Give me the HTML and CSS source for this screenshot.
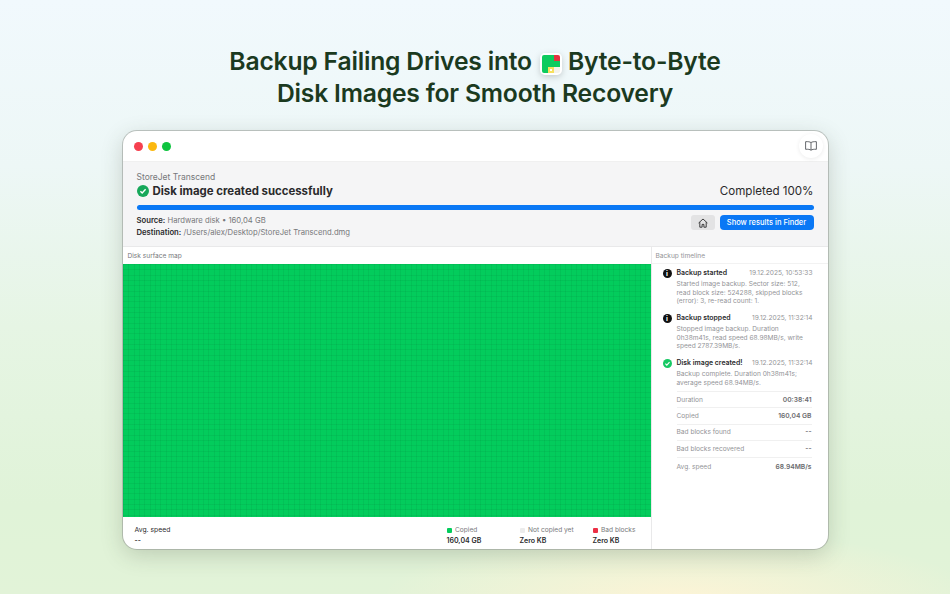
FILE: index.html
```html
<!DOCTYPE html>
<html lang="en">
<head>
    <meta charset="UTF-8">
    <meta name="viewport" content="width=device-width, initial-scale=1.0">
    <title>Backup Failing Drives</title>
    <link rel="stylesheet" href="styles.css">
</head>
<body>
    <h1 class="headline">
        <span class="headline-row">Backup Failing Drives into
            <svg class="app-icon" width="22" height="22" viewBox="0 0 22 22">
                <rect width="22" height="22" rx="5" fill="#fff"/>
                <path d="M4 2h10v6h6v6H8v6H4a2 2 0 0 1-2-2V4a2 2 0 0 1 2-2z" fill="#0dcb5e"/>
                <path d="M14 2h4a2 2 0 0 1 2 2v4h-6z" fill="#e5323f"/>
                <path d="M8 14h6v6H8z" fill="#f6e05e"/>
                <path d="M10 16h2v2h-2z" fill="#fff"/>
                <path d="M14 14h6v4a2 2 0 0 1-2 2h-4z" fill="#f4f2ea"/>
            </svg>
            Byte-to-Byte</span>
        <span class="headline-row">Disk Images for Smooth Recovery</span>
    </h1>

    <div class="window">
        <div class="titlebar">
            <div class="traffic">
                <span class="dot dot-red"></span>
                <span class="dot dot-yellow"></span>
                <span class="dot dot-green"></span>
            </div>
            <button class="book-btn" aria-label="Manual">
                <svg width="12" height="10" viewBox="0 0 12 10" fill="none" stroke="#55585c" stroke-width="0.9" stroke-linejoin="round">
                    <path d="M6 1.6C5 .8 3 .5.6.7v7.6C3 8.1 5 8.4 6 9.2c1-.8 3-1.1 5.4-.9V.7C9 .5 7 .8 6 1.6zM6 1.6v7.6"/>
                </svg>
            </button>
        </div>

        <div class="status">
            <div class="device">StoreJet Transcend</div>
            <div class="status-row">
                <div class="status-title">
                    <svg width="12" height="12" viewBox="0 0 12 12">
                        <circle cx="6" cy="6" r="6" fill="#17a85a"/>
                        <path d="M3.4 6.2l1.8 1.8 3.4-3.7" fill="none" stroke="#fff" stroke-width="1.4"/>
                    </svg>
                    Disk image created successfully
                </div>
                <div class="status-percent">Completed 100%</div>
            </div>
            <div class="progress"></div>
            <div class="status-foot">
                <div class="paths">
                    <div><b>Source:</b> Hardware disk • 160,04 GB</div>
                    <div><b>Destination:</b> /Users/alex/Desktop/StoreJet Transcend.dmg</div>
                </div>
                <button class="home-btn" aria-label="Home">
                    <svg width="10" height="10" viewBox="0 0 10 10" fill="none" stroke="#2b2b2d" stroke-width="0.9">
                        <path d="M.6 5L5 1l4.4 4M1.8 4.2v5h2.3V6.4h1.8v2.8h2.3v-5"/>
                    </svg>
                </button>
                <button class="finder-btn">Show results in Finder</button>
            </div>
        </div>

        <div class="panels">
            <div class="map-panel">
                <div class="panel-label">Disk surface map</div>
                <div class="surface"></div>
                <div class="map-foot">
                    <div class="speed">
                        <div>Avg. speed</div>
                        <b>--</b>
                    </div>
                    <div class="legend legend-copied">
                        <div class="legend-key"><span class="swatch swatch-green"></span>Copied</div>
                        <b>160,04 GB</b>
                    </div>
                    <div class="legend legend-pending">
                        <div class="legend-key"><span class="swatch swatch-grey"></span>Not copied yet</div>
                        <b>Zero KB</b>
                    </div>
                    <div class="legend legend-bad">
                        <div class="legend-key"><span class="swatch swatch-red"></span>Bad blocks</div>
                        <b>Zero KB</b>
                    </div>
                </div>
            </div>

            <div class="side-panel">
                <div class="panel-label">Backup timeline</div>
                <div class="timeline">
                    <div class="event">
                        <span class="event-icon">i</span>
                        <div class="event-body">
                            <div class="event-head"><b>Backup started</b><span>19.12.2025, 10:53:33</span></div>
                            <p>Started image backup. Sector size: 512, read block size: 524288, skipped blocks (error): 3, re-read count: 1.</p>
                        </div>
                    </div>
                    <div class="event">
                        <span class="event-icon">i</span>
                        <div class="event-body">
                            <div class="event-head"><b>Backup stopped</b><span>19.12.2025, 11:32:14</span></div>
                            <p>Stopped image backup. Duration 0h38m41s, read speed 68.98MB/s, write speed 2787.39MB/s.</p>
                        </div>
                    </div>
                    <div class="event event-short">
                        <svg class="event-check" width="9" height="9" viewBox="0 0 12 12">
                            <circle cx="6" cy="6" r="6" fill="#17c964"/>
                            <path d="M3.2 6.2l1.9 1.9 3.6-3.9" fill="none" stroke="#fff" stroke-width="1.5"/>
                        </svg>
                        <div class="event-body">
                            <div class="event-head"><b>Disk image created!</b><span>19.12.2025, 11:32:14</span></div>
                            <p>Backup complete. Duration 0h38m41s; average speed 68.94MB/s.</p>
                        </div>
                    </div>
                </div>
                <div class="stats">
                    <div class="stat"><span>Duration</span><b>00:38:41</b></div>
                    <div class="stat"><span>Copied</span><b>160,04 GB</b></div>
                    <div class="stat"><span>Bad blocks found</span><b>--</b></div>
                    <div class="stat"><span>Bad blocks recovered</span><b>--</b></div>
                    <div class="stat stat-last"><span>Avg. speed</span><b>68.94MB/s</b></div>
                </div>
            </div>
        </div>
    </div>
</body>
</html>
```

FILE: styles.css
```css
:root {
    --blue: #0a78f5;
    --green: #03cc5c;
    --text-primary: #2a2a2c;
    --text-secondary: #77787b;
    --text-muted: #939497;
    --line: #e9e9ea;
}

* {
    margin: 0;
    padding: 0;
    box-sizing: border-box;
    font-family: 'Inter', 'Liberation Sans', sans-serif;
}

html, body {
    height: 594px;
    overflow: hidden;
}

body {
    background:
        radial-gradient(ellipse 300px 70px at 680px 600px, #fdf4d6 0%, rgba(253, 244, 214, 0) 100%),
        linear-gradient(180deg, #f1f9fd 0%, #edf7f6 28%, #e6f5e4 55%, #e0f3d8 85%, #e2f3d8 100%);
    display: flex;
    flex-direction: column;
    align-items: center;
    padding-top: 45px;
}

.headline {
    color: #1b3a1f;
    font-size: 24.7px;
    line-height: 32px;
    font-weight: 600;
    letter-spacing: -0.2px;
    text-align: center;
    margin-bottom: 22px;
}

.headline-row {
    display: block;
}

.app-icon {
    vertical-align: -5px;
    margin: 0 0 0 2px;
    filter: drop-shadow(0 2px 3px rgba(0, 0, 0, 0.18));
}

.window {
    width: 705px;
    height: 418px;
    background: #fff;
    border-radius: 14px;
    overflow: hidden;
    display: flex;
    flex-direction: column;
    box-shadow: 0 0 0 1px rgba(150, 155, 150, 0.55), 0 6px 22px rgba(60, 70, 50, 0.22);
}

.titlebar {
    height: 31px;
    flex-shrink: 0;
    display: flex;
    align-items: center;
    justify-content: space-between;
    padding: 0 5px 0 11px;
    border-bottom: 1px solid #f0f0f0;
}

.traffic {
    display: flex;
    gap: 5px;
}

.dot {
    width: 9px;
    height: 9px;
    border-radius: 50%;
}

.dot-red { background: #f6404f; }
.dot-yellow { background: #fbb80f; }
.dot-green { background: #0ec43f; }

.book-btn {
    width: 24px;
    height: 24px;
    border: none;
    border-radius: 50%;
    background: #fff;
    box-shadow: 0 1px 4px rgba(0, 0, 0, 0.08);
    display: flex;
    align-items: center;
    justify-content: center;
}

.status {
    height: 85px;
    flex-shrink: 0;
    background: #f5f5f6;
    border-bottom: 1px solid var(--line);
    padding: 10px 14px 0;
}

.device {
    font-size: 8.5px;
    line-height: 10px;
    color: var(--text-secondary);
}

.status-row {
    display: flex;
    justify-content: space-between;
    align-items: center;
    height: 18px;
}

.status-title {
    display: flex;
    align-items: center;
    gap: 4px;
    font-size: 11.4px;
    font-weight: 700;
    color: var(--text-primary);
}

.status-percent {
    font-size: 11.6px;
    color: var(--text-primary);
}

.progress {
    height: 5px;
    margin-top: 5px;
    background: var(--blue);
    border-radius: 3px;
}

.status-foot {
    display: flex;
    align-items: flex-start;
    gap: 5px;
    margin-top: 5px;
}

.paths {
    flex: 1;
    font-size: 7.7px;
    line-height: 12px;
    color: var(--text-secondary);
}

.paths b {
    font-weight: 600;
    color: var(--text-primary);
}

.home-btn {
    width: 24px;
    height: 15px;
    border: none;
    border-radius: 3px;
    background: #e3e3e4;
    display: flex;
    align-items: center;
    justify-content: center;
}

.finder-btn {
    width: 94px;
    height: 15px;
    border: none;
    border-radius: 4px;
    background: var(--blue);
    color: #fff;
    font-size: 7.5px;
    font-weight: 500;
}

.panels {
    flex: 1;
    display: flex;
    min-height: 0;
}

.map-panel {
    width: 528px;
    display: flex;
    flex-direction: column;
}

.panel-label {
    height: 17px;
    padding-left: 5px;
    font-size: 6.6px;
    line-height: 18px;
    color: var(--text-secondary);
}

.surface {
    height: 253px;
    background-color: var(--green);
    background-image:
        repeating-linear-gradient(90deg, rgba(0, 90, 40, 0.09) 0 1px, transparent 1px 5.33px),
        repeating-linear-gradient(180deg, rgba(0, 90, 40, 0.09) 0 1px, transparent 1px 5.33px);
}

.map-foot {
    flex: 1;
    display: flex;
    padding: 8px 0 0 12px;
    font-size: 7px;
    line-height: 10.5px;
    color: var(--text-primary);
}

.map-foot b {
    font-weight: 600;
}

.speed {
    width: 312px;
    font-size: 6.8px;
}

.legend-copied { width: 73px; }
.legend-pending { width: 73px; }

.legend-key {
    display: flex;
    align-items: center;
    gap: 3.5px;
    font-size: 6.6px;
    color: var(--text-secondary);
}

.swatch {
    width: 5px;
    height: 5px;
    border-radius: 1px;
}

.swatch-green { background: var(--green); }
.swatch-grey { background: #ececec; }
.swatch-red { background: #ec2f45; }

.side-panel {
    flex: 1;
    border-left: 1px solid var(--line);
}

.side-panel .panel-label {
    height: 17px;
    padding-left: 4px;
    border-bottom: 1px solid #f2f2f2;
    color: var(--text-muted);
}

.timeline {
    padding: 3px 15px 0 11px;
}

.event {
    display: flex;
    gap: 5px;
    height: 45px;
}

.event-short {
    height: 34px;
}

.event-icon {
    width: 9px;
    height: 9px;
    flex-shrink: 0;
    margin-top: 2px;
    border-radius: 50%;
    background: #111;
    color: #fff;
    font-size: 7px;
    font-weight: 700;
    line-height: 9px;
    text-align: center;
}

.event-check {
    flex-shrink: 0;
    margin-top: 2px;
}

.event-body {
    flex: 1;
    min-width: 0;
}

.event-head {
    display: flex;
    justify-content: space-between;
    height: 13px;
    font-size: 6.6px;
    line-height: 12px;
    color: var(--text-muted);
}

.event-head b {
    font-size: 6.9px;
    font-weight: 600;
    color: var(--text-primary);
}

.event p {
    font-size: 6.6px;
    line-height: 8.7px;
    color: var(--text-muted);
}

.stats {
    margin: 0 16px 0 25px;
}

.stat {
    display: flex;
    justify-content: space-between;
    align-items: center;
    height: 16.4px;
    border-top: 1px solid #f0f0f0;
    font-size: 6.6px;
    color: var(--text-muted);
}

.stat b {
    font-size: 6.7px;
    font-weight: 600;
    color: #6b6c6f;
}

.stat-last {
    height: 19px;
}
```
